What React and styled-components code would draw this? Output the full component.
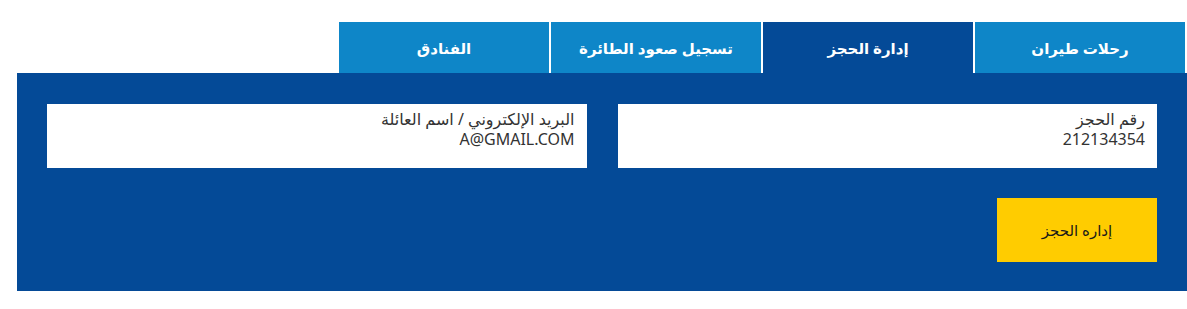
import styled, { createGlobalStyle } from "styled-components";

const Global = createGlobalStyle`
    body {
        margin: 0;
        background: #ffffff;
        font-family: "Noto Sans", "DejaVu Sans", sans-serif;
    }
`;

const Page = styled.div`
    direction: rtl;
    padding-top: 22px;
    width: 1187px;
`;

const Tabs = styled.div`
    display: flex;
    gap: 2px;
    padding-right: 2px;
`;

const Tab = styled.div`
    width: 210px;
    height: 51px;
    display: flex;
    align-items: center;
    justify-content: center;
    background-color: ${(p) => (p.active ? "#044a97" : "#0e86c8")};
    color: #ffffff;
    font-size: 15px;
    font-weight: 600;
`;

const Panel = styled.div`
    margin-left: 17px;
    background-color: #044a97;
    padding: 31px 30px 29px 30px;
`;

const Fields = styled.div`
    display: flex;
    gap: 31px;
`;

const Field = styled.div`
    flex: 1;
    height: 64px;
    background: #ffffff;
    padding: 5px 12px 0 12px;
    box-sizing: border-box;
    color: #333333;
    font-size: 16px;
    line-height: 20px;
`;

const Label = styled.div`
    white-space: nowrap;
`;

const Value = styled.div`
    direction: ltr;
    text-align: right;
`;

const Actions = styled.div`
    display: flex;
    margin-top: 30px;
`;

const Button = styled.div`
    width: 160px;
    height: 64px;
    display: flex;
    align-items: center;
    justify-content: center;
    background-color: #ffcc00;
    color: #1a1a1a;
    font-size: 15px;
    cursor: pointer;
`;

const tabs = ["رحلات طيران", "إدارة الحجز", "تسجيل صعود الطائرة", "الفنادق"];

export default function App() {
    return (
        <Page>
            <Global />
            <Tabs>
                {tabs.map((t, i) => (
                    <Tab key={t} active={i === 1}>{t}</Tab>
                ))}
            </Tabs>
            <Panel>
                <Fields>
                    <Field>
                        <Label>رقم الحجز</Label>
                        <Value>212134354</Value>
                    </Field>
                    <Field>
                        <Label>البريد الإلكتروني / اسم العائلة</Label>
                        <Value>A@GMAIL.COM</Value>
                    </Field>
                </Fields>
                <Actions>
                    <Button>إداره الحجز</Button>
                </Actions>
            </Panel>
        </Page>
    );
}
